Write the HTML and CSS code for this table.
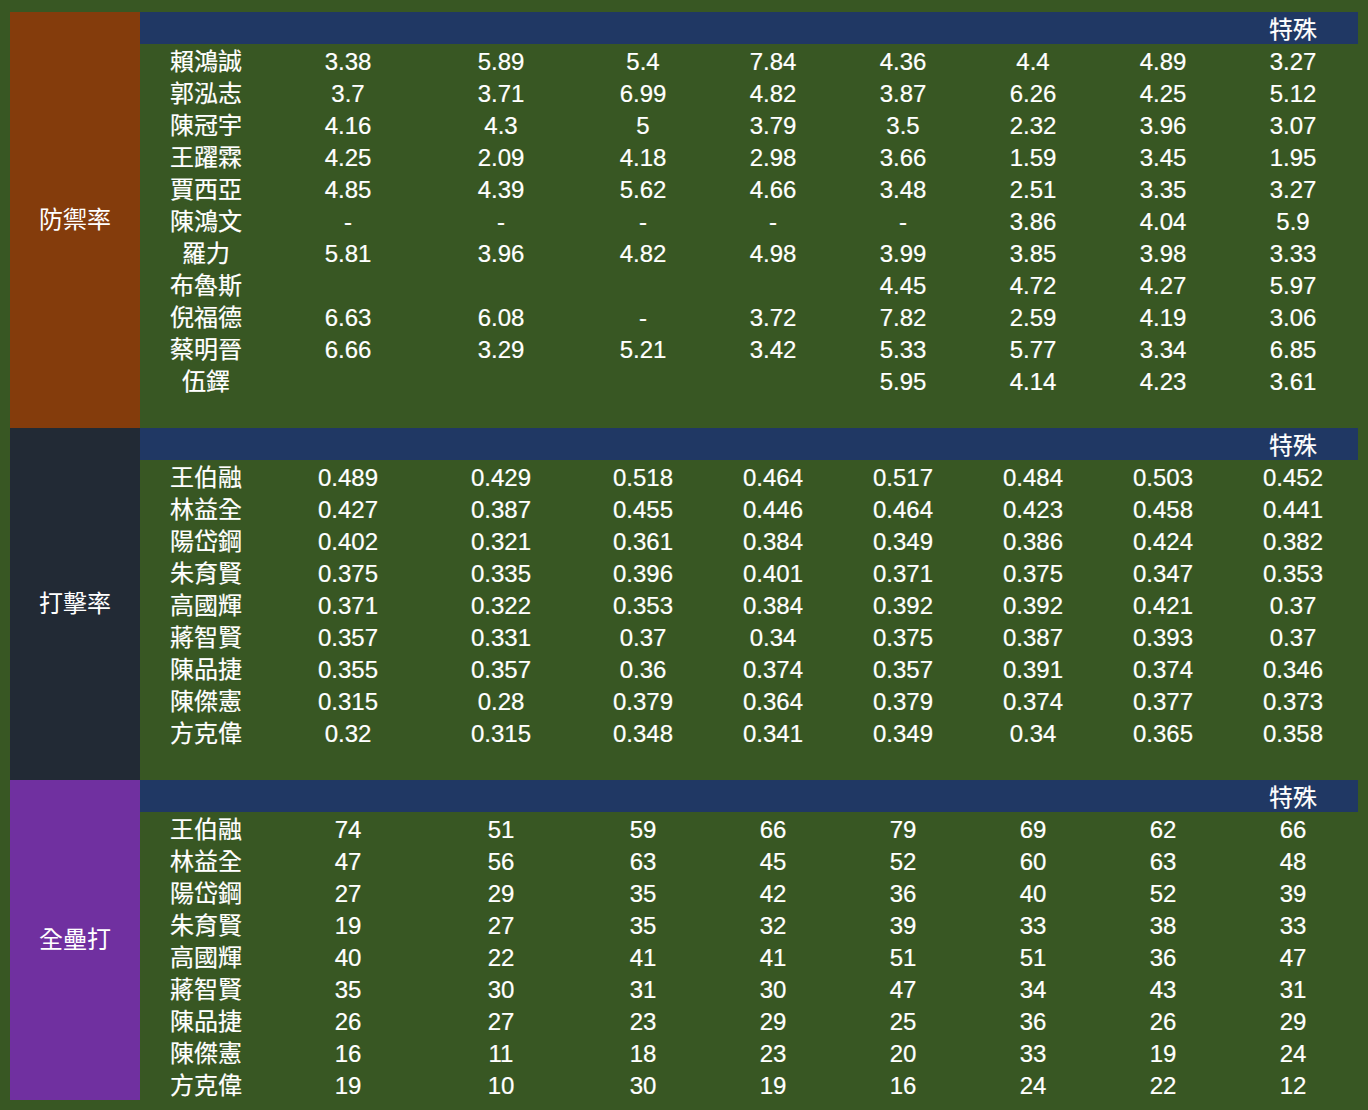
FILE: index.html
```html
<!DOCTYPE html>
<html lang="zh-Hant">
<head>
<meta charset="utf-8">
<title>Stats</title>
<link rel="stylesheet" href="styles.css">
</head>
<body>
<table class="stats">
  <colgroup>
    <col class="c-label"><col class="c-name"><col class="c-wide1"><col class="c-wide2">
    <col class="c-num"><col class="c-num"><col class="c-num"><col class="c-num"><col class="c-num"><col class="c-num">
  </colgroup>
  <tbody>
    <tr class="head">
      <td class="label era" rowspan="13">防禦率</td>
      <td></td><td></td><td></td><td></td><td></td><td></td><td></td><td></td><td>特殊</td>
    </tr>
    <tr><td>賴鴻誠</td><td>3.38</td><td>5.89</td><td>5.4</td><td>7.84</td><td>4.36</td><td>4.4</td><td>4.89</td><td>3.27</td></tr>
    <tr><td>郭泓志</td><td>3.7</td><td>3.71</td><td>6.99</td><td>4.82</td><td>3.87</td><td>6.26</td><td>4.25</td><td>5.12</td></tr>
    <tr><td>陳冠宇</td><td>4.16</td><td>4.3</td><td>5</td><td>3.79</td><td>3.5</td><td>2.32</td><td>3.96</td><td>3.07</td></tr>
    <tr><td>王躍霖</td><td>4.25</td><td>2.09</td><td>4.18</td><td>2.98</td><td>3.66</td><td>1.59</td><td>3.45</td><td>1.95</td></tr>
    <tr><td>賈西亞</td><td>4.85</td><td>4.39</td><td>5.62</td><td>4.66</td><td>3.48</td><td>2.51</td><td>3.35</td><td>3.27</td></tr>
    <tr><td>陳鴻文</td><td>-</td><td>-</td><td>-</td><td>-</td><td>-</td><td>3.86</td><td>4.04</td><td>5.9</td></tr>
    <tr><td>羅力</td><td>5.81</td><td>3.96</td><td>4.82</td><td>4.98</td><td>3.99</td><td>3.85</td><td>3.98</td><td>3.33</td></tr>
    <tr><td>布魯斯</td><td></td><td></td><td></td><td></td><td>4.45</td><td>4.72</td><td>4.27</td><td>5.97</td></tr>
    <tr><td>倪福德</td><td>6.63</td><td>6.08</td><td>-</td><td>3.72</td><td>7.82</td><td>2.59</td><td>4.19</td><td>3.06</td></tr>
    <tr><td>蔡明晉</td><td>6.66</td><td>3.29</td><td>5.21</td><td>3.42</td><td>5.33</td><td>5.77</td><td>3.34</td><td>6.85</td></tr>
    <tr><td>伍鐸</td><td></td><td></td><td></td><td></td><td>5.95</td><td>4.14</td><td>4.23</td><td>3.61</td></tr>
    <tr class="spacer"><td colspan="9"></td></tr>

    <tr class="head">
      <td class="label avg" rowspan="11">打擊率</td>
      <td></td><td></td><td></td><td></td><td></td><td></td><td></td><td></td><td>特殊</td>
    </tr>
    <tr><td>王伯融</td><td>0.489</td><td>0.429</td><td>0.518</td><td>0.464</td><td>0.517</td><td>0.484</td><td>0.503</td><td>0.452</td></tr>
    <tr><td>林益全</td><td>0.427</td><td>0.387</td><td>0.455</td><td>0.446</td><td>0.464</td><td>0.423</td><td>0.458</td><td>0.441</td></tr>
    <tr><td>陽岱鋼</td><td>0.402</td><td>0.321</td><td>0.361</td><td>0.384</td><td>0.349</td><td>0.386</td><td>0.424</td><td>0.382</td></tr>
    <tr><td>朱育賢</td><td>0.375</td><td>0.335</td><td>0.396</td><td>0.401</td><td>0.371</td><td>0.375</td><td>0.347</td><td>0.353</td></tr>
    <tr><td>高國輝</td><td>0.371</td><td>0.322</td><td>0.353</td><td>0.384</td><td>0.392</td><td>0.392</td><td>0.421</td><td>0.37</td></tr>
    <tr><td>蔣智賢</td><td>0.357</td><td>0.331</td><td>0.37</td><td>0.34</td><td>0.375</td><td>0.387</td><td>0.393</td><td>0.37</td></tr>
    <tr><td>陳品捷</td><td>0.355</td><td>0.357</td><td>0.36</td><td>0.374</td><td>0.357</td><td>0.391</td><td>0.374</td><td>0.346</td></tr>
    <tr><td>陳傑憲</td><td>0.315</td><td>0.28</td><td>0.379</td><td>0.364</td><td>0.379</td><td>0.374</td><td>0.377</td><td>0.373</td></tr>
    <tr><td>方克偉</td><td>0.32</td><td>0.315</td><td>0.348</td><td>0.341</td><td>0.349</td><td>0.34</td><td>0.365</td><td>0.358</td></tr>
    <tr class="spacer"><td colspan="9"></td></tr>

    <tr class="head">
      <td class="label hr" rowspan="10">全壘打</td>
      <td></td><td></td><td></td><td></td><td></td><td></td><td></td><td></td><td>特殊</td>
    </tr>
    <tr><td>王伯融</td><td>74</td><td>51</td><td>59</td><td>66</td><td>79</td><td>69</td><td>62</td><td>66</td></tr>
    <tr><td>林益全</td><td>47</td><td>56</td><td>63</td><td>45</td><td>52</td><td>60</td><td>63</td><td>48</td></tr>
    <tr><td>陽岱鋼</td><td>27</td><td>29</td><td>35</td><td>42</td><td>36</td><td>40</td><td>52</td><td>39</td></tr>
    <tr><td>朱育賢</td><td>19</td><td>27</td><td>35</td><td>32</td><td>39</td><td>33</td><td>38</td><td>33</td></tr>
    <tr><td>高國輝</td><td>40</td><td>22</td><td>41</td><td>41</td><td>51</td><td>51</td><td>36</td><td>47</td></tr>
    <tr><td>蔣智賢</td><td>35</td><td>30</td><td>31</td><td>30</td><td>47</td><td>34</td><td>43</td><td>31</td></tr>
    <tr><td>陳品捷</td><td>26</td><td>27</td><td>23</td><td>29</td><td>25</td><td>36</td><td>26</td><td>29</td></tr>
    <tr><td>陳傑憲</td><td>16</td><td>11</td><td>18</td><td>23</td><td>20</td><td>33</td><td>19</td><td>24</td></tr>
    <tr><td>方克偉</td><td>19</td><td>10</td><td>30</td><td>19</td><td>16</td><td>24</td><td>22</td><td>12</td></tr>
  </tbody>
</table>
</body>
</html>
```

FILE: styles.css
```css
html, body {
  background: #385723;
}
body {
  margin: 0;
  padding: 12px 10px 10px 10px;
  font-family: "Liberation Sans", "Noto Sans CJK TC", sans-serif;
  font-size: 24px;
  color: #ffffff;
}
.stats {
  border-collapse: collapse;
  border-spacing: 0;
  table-layout: fixed;
  width: 1348px;
}
.c-label { width: 130px; }
.c-name { width: 132px; }
.c-wide1 { width: 152px; }
.c-wide2 { width: 154px; }
.c-num { width: 130px; }
.stats td {
  padding: 4px 0 0 0;
  height: 28px;
  line-height: 28px;
  text-align: center;
  vertical-align: middle;
  white-space: nowrap;
  overflow: hidden;
  -webkit-text-stroke: 0.2px #ffffff;
}
.stats tr.head td {
  background: #203864;
}
.stats td.label {
  padding: 0;
  vertical-align: middle;
  line-height: 32px;
  -webkit-text-stroke: 0;
}
.stats tr.head td.era,
.stats td.era { background: #843c0c; }
.stats tr.head td.avg,
.stats td.avg { background: #222a35; }
.stats tr.head td.hr,
.stats td.hr { background: #7030a0; }
```
